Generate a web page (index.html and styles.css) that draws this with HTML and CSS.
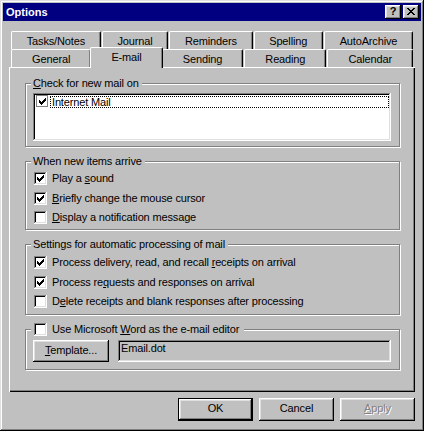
FILE: index.html
```html
<!DOCTYPE html>
<html lang="en">
<head>
<meta charset="utf-8">
<title>Options</title>
<link rel="stylesheet" href="styles.css">
</head>
<body>
<div class="window">
  <div class="titlebar">
    <span class="title">Options</span>
    <div class="caption-buttons">
      <button class="cap-btn"><span class="help-glyph">?</span></button>
      <button class="cap-btn"><svg class="close-glyph" width="8" height="7" viewBox="0 0 8 7" shape-rendering="crispEdges"><path d="M0 0h2v1H0zM6 0h2v1H6zM1 1h2v1H1zM5 1h2v1H5zM2 2h4v1H2zM3 3h2v1H3zM2 4h4v1H2zM1 5h2v1H1zM5 5h2v1H5zM0 6h2v1H0zM6 6h2v1H6z"/></svg></button>
    </div>
  </div>
  <div class="client">
    <div class="tabs">
      <div class="tabrow">
        <div class="tab">Tasks/Notes</div>
        <div class="tab">Journal</div>
        <div class="tab">Reminders</div>
        <div class="tab">Spelling</div>
        <div class="tab">AutoArchive</div>
      </div>
      <div class="tabrow">
        <div class="tab">General</div>
        <div class="tab active">E-mail</div>
        <div class="tab">Sending</div>
        <div class="tab">Reading</div>
        <div class="tab">Calendar</div>
      </div>
    </div>
    <div class="panel">
      <div class="group g-mail">
        <div class="legend"><u>C</u>heck for new mail on</div>
        <div class="listbox">
          <div class="item">
            <span class="flatcb"><svg class="check" width="7" height="7" viewBox="0 0 7 7" shape-rendering="crispEdges"><path d="M0 2h1v3H0zM1 3h1v3H1zM2 4h1v3H2zM3 3h1v3H3zM4 2h1v3H4zM5 1h1v3H5zM6 0h1v3H6z"/></svg></span>
            <span class="item-label">Internet Mail</span>
          </div>
        </div>
      </div>
      <div class="group g-new">
        <div class="legend">When new items arrive</div>
        <div class="checks">
          <div class="check-row"><span class="cb"><svg class="check" width="7" height="7" viewBox="0 0 7 7" shape-rendering="crispEdges"><path d="M0 2h1v3H0zM1 3h1v3H1zM2 4h1v3H2zM3 3h1v3H3zM4 2h1v3H4zM5 1h1v3H5zM6 0h1v3H6z"/></svg></span><span class="label">Play a <u>s</u>ound</span></div>
          <div class="check-row"><span class="cb"><svg class="check" width="7" height="7" viewBox="0 0 7 7" shape-rendering="crispEdges"><path d="M0 2h1v3H0zM1 3h1v3H1zM2 4h1v3H2zM3 3h1v3H3zM4 2h1v3H4zM5 1h1v3H5zM6 0h1v3H6z"/></svg></span><span class="label"><u>B</u>riefly change the mouse cursor</span></div>
          <div class="check-row"><span class="cb"></span><span class="label"><u>D</u>isplay a notification message</span></div>
        </div>
      </div>
      <div class="group g-auto">
        <div class="legend">Settings for automatic processing of mail</div>
        <div class="checks">
          <div class="check-row"><span class="cb"><svg class="check" width="7" height="7" viewBox="0 0 7 7" shape-rendering="crispEdges"><path d="M0 2h1v3H0zM1 3h1v3H1zM2 4h1v3H2zM3 3h1v3H3zM4 2h1v3H4zM5 1h1v3H5zM6 0h1v3H6z"/></svg></span><span class="label">Process delivery, read, and recall <u>r</u>eceipts on arrival</span></div>
          <div class="check-row"><span class="cb"><svg class="check" width="7" height="7" viewBox="0 0 7 7" shape-rendering="crispEdges"><path d="M0 2h1v3H0zM1 3h1v3H1zM2 4h1v3H2zM3 3h1v3H3zM4 2h1v3H4zM5 1h1v3H5zM6 0h1v3H6z"/></svg></span><span class="label">Process re<u>q</u>uests and responses on arrival</span></div>
          <div class="check-row"><span class="cb"></span><span class="label">D<u>e</u>lete receipts and blank responses after processing</span></div>
        </div>
      </div>
      <div class="group g-word">
        <div class="legend legend-check"><span class="cb"></span><span class="label">Use Microsoft <u>W</u>ord as the e-mail editor</span></div>
        <div class="editor-row">
          <button class="btn btn-template"><u>T</u>emplate...</button>
          <div class="field">Email.dot</div>
        </div>
      </div>
    </div>
    <div class="buttons">
      <button class="btn default">OK</button>
      <button class="btn">Cancel</button>
      <button class="btn" disabled><u>A</u>pply</button>
    </div>
  </div>
</div>
</body>
</html>
```
FILE: styles.css
```css
* { box-sizing: border-box; }

html, body {
  margin: 0;
  padding: 0;
  background: #c0c0c0;
}

body {
  font-family: "Liberation Sans", Arial, sans-serif;
  font-size: 11px;
  color: #000;
  letter-spacing: -0.15px;
}

.window {
  width: 424px;
  height: 431px;
  padding: 3px;
  background: #c0c0c0;
  box-shadow: inset -1px -1px #000, inset 1px 1px #dfdfdf, inset -2px -2px #808080, inset 2px 2px #fff;
}

.titlebar {
  height: 18px;
  background: #000080;
  color: #fff;
  display: flex;
  align-items: center;
  justify-content: space-between;
  padding: 0 2px 0 3px;
}

.title {
  font-weight: bold;
  letter-spacing: 0;
  line-height: 18px;
}

.caption-buttons {
  display: flex;
  gap: 2px;
}

.cap-btn {
  width: 16px;
  height: 14px;
  padding: 0;
  border: 0;
  margin: 0;
  background: #c0c0c0;
  box-shadow: inset -1px -1px #000, inset 1px 1px #fff, inset -2px -2px #808080, inset 2px 2px #dfdfdf;
  display: flex;
  align-items: center;
  justify-content: center;
  color: #000;
}

.help-glyph {
  font-family: "Liberation Sans", Arial, sans-serif;
  font-weight: bold;
  font-size: 11px;
  line-height: 11px;
  letter-spacing: 0;
  margin-top: -1px;
}

.close-glyph {
  display: block;
  fill: #000;
  margin-top: -1px;
}

.client {
  padding: 10px 6px 0;
}

.tabs {
  margin: 0 2px;
}

.tabrow {
  display: flex;
  gap: 1px;
  height: 18px;
}

.tab {
  flex: 1 1 auto;
  text-align: center;
  white-space: nowrap;
  background: #c0c0c0;
  border-top: 1px solid #fff;
  border-left: 1px solid #fff;
  border-right: 1px solid #000;
  border-radius: 2px 2px 0 0;
  box-shadow: inset -1px 0 #808080;
  padding-top: 2px;
  line-height: 14px;
}

.tab.active {
  margin: -2px -2px -1px;
  position: relative;
  z-index: 1;
}

.panel {
  height: 325px;
  padding: 16px 15px 0 16px;
  box-shadow: inset 1px 1px #fff, inset -1px -1px #000, inset -2px -2px #808080;
}

.group {
  border: 1px solid #808080;
  box-shadow: 1px 1px 0 #fff, inset 1px 1px 0 #fff;
  padding: 0 8px 0 7px;
}

.group + .group {
  margin-top: 14px;
}

.legend {
  width: fit-content;
  margin: -7px 0 0 -2px;
  padding: 0 3px 0 2px;
  height: 13px;
  line-height: 13px;
  background: #c0c0c0;
  white-space: nowrap;
}

.legend-check {
  display: flex;
  align-items: center;
  padding: 0 5px 0 2px;
}

.listbox {
  margin-top: 3px;
  height: 48px;
  padding: 2px;
  background: #fff;
  box-shadow: inset -1px -1px #fff, inset 1px 1px #808080, inset -2px -2px #dfdfdf, inset 2px 2px #000;
}

.g-mail { padding-bottom: 5px; }

.item {
  display: flex;
  align-items: flex-start;
}

.flatcb {
  flex: none;
  width: 12px;
  height: 12px;
  margin-left: 1px;
  border: 1px solid #808080;
  background: #fff;
  padding: 2px 0 0 2px;
}

.check {
  display: block;
  fill: #000;
}

.item-label {
  flex: 1;
  margin: 1px 0 0 2px;
  padding-left: 2px;
  height: 12px;
  line-height: 12px;
  outline: 1px dotted #000;
  outline-offset: -1px;
}

.checks { padding: 1px 0 1.5px; }
.g-auto .checks { padding: 2px 0 2.5px; }

.check-row {
  display: flex;
  align-items: center;
  height: 19.5px;
}

.cb {
  flex: none;
  width: 13px;
  height: 13px;
  margin: 0 5px 0 1px;
  padding: 3px;
  background: #fff;
  box-shadow: inset -1px -1px #fff, inset 1px 1px #808080, inset -2px -2px #dfdfdf, inset 2px 2px #000;
}

.label {
  line-height: 13px;
  white-space: nowrap;
}

.g-word { padding-bottom: 7px; }

.editor-row {
  display: flex;
  gap: 9px;
  margin-top: 4px;
}

.btn {
  width: 75px;
  height: 23px;
  margin: 0;
  padding: 0 0 2px;
  border: 0;
  background: #c0c0c0;
  font: inherit;
  letter-spacing: inherit;
  line-height: 19px;
  color: #000;
  text-align: center;
  box-shadow: inset -1px -1px #000, inset 1px 1px #fff, inset -2px -2px #808080, inset 2px 2px #dfdfdf;
}

.btn-template {
  flex: none;
  width: 76px;
  height: 22px;
  line-height: 18px;
}

.btn.default {
  box-shadow: inset 0 0 0 1px #000, inset -2px -2px #000, inset 2px 2px #fff, inset -3px -3px #808080, inset 3px 3px #dfdfdf;
}

.btn:disabled {
  color: #808080;
  text-shadow: 1px 1px 0 #fff;
}

.field {
  flex: 1;
  height: 22px;
  padding: 2px 3px 0;
  line-height: 13px;
  background: #c0c0c0;
  box-shadow: inset -1px -1px #fff, inset 1px 1px #808080, inset -2px -2px #dfdfdf, inset 2px 2px #000;
}

.buttons {
  display: flex;
  justify-content: flex-end;
  gap: 6px;
  margin-top: 6px;
}
```
